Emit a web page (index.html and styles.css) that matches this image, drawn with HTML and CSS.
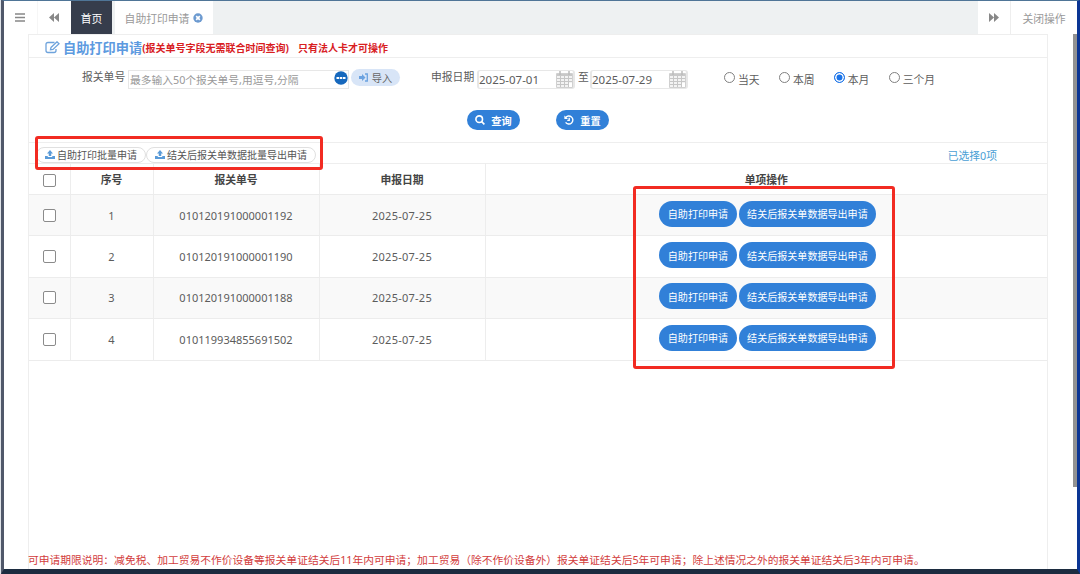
FILE: index.html
```html
<!DOCTYPE html>
<html lang="zh-CN">
<head>
  <meta charset="UTF-8">
  <meta name="viewport" content="width=device-width, initial-scale=1.0">
  <title>自助打印申请</title>
  <link rel="stylesheet" href="styles.css">
</head>
<body>
<svg width="0" height="0" class="defs">
  <symbol id="upload" viewBox="0 0 20 18">
    <path d="M10 0L16 7H12.500V12H7.500V7H4Z"/>
    <path d="M0 12H5.500V14H14.500V12H20V18H0Z"/>
  </symbol>
  <symbol id="calendar" viewBox="0 0 17 17">
    <path d="M.5 2.500H16.500V16.500H.5Z" fill="#f3f3f3" stroke="#d0d0d0"/>
    <path d="M1 4H16" stroke="#c8c8c8" stroke-width="2"/>
    <path d="M4 0V4M13 0V4" stroke="#bbb" stroke-width="1.500"/>
    <path d="M1 7.500H16M1 10.500H16M1 13.500H13M4.500 5V16M8.500 5V16M12.500 5V16" stroke="#c6c6c6"/>
    <path d="M13 12H16V16H13Z" fill="#fff"/>
  </symbol>
</svg>
<div class="window">
  <nav class="tabs">
    <a class="tab-btn menu"><svg width="10" height="9" viewBox="0 0 10 9"><path d="M0 1H10M0 4.500H10M0 8H10" stroke="#888" stroke-width="1.300"/></svg></a>
    <a class="tab-btn back"><svg width="10" height="9" viewBox="0 0 10 9"><path d="M5 0V9L0 4.500ZM10 0V9L5 4.500Z" fill="#888"/></svg></a>
    <a class="tab home">首页</a>
    <a class="tab current">自助打印申请
      <svg width="10" height="10" viewBox="0 0 10 10"><circle cx="5" cy="5" r="4.700" fill="#6c9ad0"/><path d="M3.200 3.200L6.800 6.800M6.800 3.200L3.200 6.800" stroke="#fff" stroke-width="1.700"/></svg>
    </a>
    <a class="tab-btn forward"><svg width="10" height="9" viewBox="0 0 10 9"><path d="M0 0V9L5 4.500ZM5 0V9L10 4.500Z" fill="#888"/></svg></a>
    <a class="tab close">关闭操作</a>
  </nav>

  <div class="content">
    <div class="panel">
      <div class="title">
        <svg width="15" height="13" viewBox="0 0 15 13" fill="none" stroke="#6ea3dc" stroke-width="1.300"><path d="M9.500 1.500H3Q1 1.500 1 3.500V9.500Q1 11.500 3 11.500H9Q11 11.500 11 9.500V8"/><path d="M5.500 8.700L6 6.400L12 .8L14 2.800L8 8.400Z"/></svg>
        <h1>自助打印申请</h1>
        <span class="hint">(报关单号字段无需联合时间查询)</span>
        <span class="hint second">只有法人卡才可操作</span>
      </div>

      <div class="search">
        <div class="fields">
          <label class="lbl">报关单号</label>
          <div class="input number">
            <span>最多输入50个报关单号,用逗号,分隔</span>
            <svg width="14" height="14" viewBox="0 0 14 14"><circle cx="7" cy="7" r="6.700" fill="#1668bd"/><path d="M2.500 7H5M5.700 7H8.300M9 7H11.500" stroke="#fff" stroke-width="2.200"/></svg>
          </div>
          <button class="import"><svg width="10" height="9" viewBox="0 0 10 9"><path d="M0 3H3V1L6.500 4.500L3 8V6H0Z" fill="#6ba2e0"/><path d="M6 1H8.300V8H6" fill="none" stroke="#6ba2e0" stroke-width="1.300"/></svg>导入</button>
          <label class="lbl date-lbl">申报日期</label>
          <div class="input date">2025-07-01<svg width="17" height="17"><use href="#calendar"/></svg></div>
          <label class="lbl to">至</label>
          <div class="input date">2025-07-29<svg width="17" height="17"><use href="#calendar"/></svg></div>
          <div class="radios">
            <label><i class="radio"></i>当天</label>
            <label><i class="radio"></i>本周</label>
            <label><i class="radio on"></i>本月</label>
            <label><i class="radio"></i>三个月</label>
          </div>
        </div>
        <div class="actions">
          <button class="btn"><svg width="10" height="10" viewBox="0 0 10 10" fill="none" stroke="#fff" stroke-width="1.600"><circle cx="4.200" cy="4.200" r="3.300"/><path d="M6.600 6.600L9.400 9.400"/></svg>查询</button>
          <button class="btn"><svg width="10" height="10" viewBox="0 0 10 10" fill="none" stroke="#fff" stroke-width="1.400"><path d="M1.500 2.800A4 4 0 1 1 1.600 7.300M5.200 2.800V5.400H3.300"/><path d="M.4 .5V4H4Z" fill="#fff" stroke="none"/></svg>重置</button>
        </div>
      </div>

      <div class="toolbar">
        <button class="batch"><svg width="10" height="9"><use href="#upload"/></svg>自助打印批量申请</button>
        <button class="batch"><svg width="10" height="9"><use href="#upload"/></svg>结关后报关单数据批量导出申请</button>
        <span class="selected">已选择0项</span>
        <div class="mark mark-batch"></div>
      </div>

      <div class="table-wrap">
        <table>
          <colgroup><col class="c1"><col class="c2"><col class="c3"><col class="c4"><col></colgroup>
          <thead>
            <tr><th><i class="check"></i></th><th>序号</th><th>报关单号</th><th>申报日期</th><th>单项操作</th></tr>
          </thead>
          <tbody>
            <tr><td><i class="check"></i></td><td>1</td><td>010120191000001192</td><td class="day">2025-07-25</td><td><div class="ops"><button class="op">自助打印申请</button><button class="op">结关后报关单数据导出申请</button></div></td></tr>
            <tr><td><i class="check"></i></td><td>2</td><td>010120191000001190</td><td class="day">2025-07-25</td><td><div class="ops"><button class="op">自助打印申请</button><button class="op">结关后报关单数据导出申请</button></div></td></tr>
            <tr><td><i class="check"></i></td><td>3</td><td>010120191000001188</td><td class="day">2025-07-25</td><td><div class="ops"><button class="op">自助打印申请</button><button class="op">结关后报关单数据导出申请</button></div></td></tr>
            <tr><td><i class="check"></i></td><td>4</td><td>010119934855691502</td><td class="day">2025-07-25</td><td><div class="ops"><button class="op">自助打印申请</button><button class="op">结关后报关单数据导出申请</button></div></td></tr>
          </tbody>
        </table>
        <div class="mark mark-ops"></div>
      </div>

      <p class="notice">可申请期限说明：减免税、加工贸易不作价设备等报关单证结关后11年内可申请；加工贸易（除不作价设备外）报关单证结关后5年可申请；除上述情况之外的报关单证结关后3年内可申请。</p>
    </div>
    <div class="scrollbar"></div>
  </div>
</div>
</body>
</html>
```

FILE: styles.css
```css
* {
  box-sizing: border-box;
}
body {
  margin: 0;
  font-family: "Noto Sans", "Noto Sans CJK SC", sans-serif;
  font-size: 10.8px;
  color: #5c5c5c;
  background: #dfe3e8;
}
button {
  font-family: inherit;
  padding: 0;
  border: none;
  white-space: nowrap;
}
.defs {
  position: absolute;
}
.window {
  display: flex;
  flex-direction: column;
  height: 574px;
  margin-left: 1px;
  background: #fff;
  border-style: solid;
  border-width: 1px 3px 5px 3px;
  border-color: #4f7597 #0b3594 #1c2c40 #50586a;
}

/* tabs */
.tabs {
  display: flex;
  height: 33px;
  background: #eef1f2;
  color: #999;
}
.tab-btn, .tab {
  display: flex;
  align-items: center;
  justify-content: center;
  background: #fff;
  flex: none;
}
.tab-btn {
  width: 33px;
}
.menu {
  width: 34px;
  padding-right: 2px;
  border-right: 1px solid #f6f6f6;
}
.back {
  padding-right: 1px;
}
.home {
  width: 41px;
  background: #363d4c;
  color: #fff;
}
.current {
  width: 98px;
  margin-left: 3px;
  gap: 4px;
}
.forward {
  margin-left: auto;
  border-right: 1px solid #eee;
}
.close {
  width: 66px;
}

.content {
  display: flex;
  flex: 1;
  padding-left: 24px;
}
.panel {
  display: flex;
  flex-direction: column;
  width: 1020px;
  border: 1px solid #eee;
  border-bottom: none;
}
.scrollbar {
  width: 4px;
  height: 453px;
  margin-left: auto;
  background: #929292;
}

.title {
  display: flex;
  align-items: center;
  height: 23px;
  padding: 3px 0 0 16px;
  border-bottom: 1px solid #eee;
}
.title h1 {
  margin: 0 0 0 3px;
  font-size: 13.2px;
  line-height: 18px;
  color: #5c9ae0;
}
.hint {
  font-size: 10px;
  font-weight: bold;
  color: #d8201f;
}
.second {
  margin-left: 9px;
}

/* search form */
.search {
  height: 85px;
  padding-top: 10px;
  border-bottom: 1px solid #eee;
}
.fields {
  display: flex;
  align-items: flex-start;
  height: 32px;
  padding-left: 53px;
}
.lbl {
  width: 46px;
  line-height: 17px;
}
.input {
  display: flex;
  align-items: center;
  justify-content: space-between;
  height: 19px;
  margin-top: 2px;
  border: 1px solid #e7e7e7;
  white-space: nowrap;
}
.number {
  width: 221px;
  padding-left: 1px;
  font-size: 10.75px;
  color: #999;
}
.number svg {
  margin-top: -4px;
}
.import {
  display: flex;
  align-items: center;
  justify-content: center;
  gap: 3px;
  width: 49px;
  height: 17px;
  margin: 1px 0 0 2px;
  border-radius: 9px;
  background: #d8e5f7;
  color: #666;
  font-size: 10.2px;
}
.date-lbl {
  margin-left: 31px;
}
.date {
  width: 98px;
  padding-left: 0;
  border-width: 1px 2px;
  border-radius: 3px;
  font-size: 11.5px;
}
.to {
  width: 12px;
  margin-left: 3px;
}
.radios {
  display: flex;
  margin-left: 36px;
  gap: 19.3px;
  padding-top: 2px;
}
.radios label {
  display: flex;
  line-height: 19px;
}
.radio {
  width: 11px;
  height: 11px;
  margin: 2px 3px 0 0;
  border: 1px solid #808080;
  border-radius: 50%;
}
.radio.on {
  border-color: #1a73e8;
  background: #1a73e8;
  box-shadow: inset 0 0 0 1.5px #fff;
}
.actions {
  display: flex;
  gap: 36px;
  padding: 10px 0 0 438px;
}
.btn {
  display: flex;
  align-items: center;
  justify-content: center;
  gap: 6px;
  width: 53px;
  height: 20px;
  border-radius: 10px;
  background: #3180d8;
  color: #fff;
  font-size: 10.2px;
  font-weight: bold;
}

.toolbar {
  position: relative;
  z-index: 1;
  display: flex;
  align-items: center;
  height: 20px;
  padding: 3px 50px 0 7px;
}
.batch {
  display: flex;
  align-items: center;
  gap: 2px;
  height: 16px;
  padding: 0 8px;
  border: 1px solid #e0e0e0;
  border-radius: 8px;
  background: #fff;
  color: #555;
  font-size: 10px;
}
.batch svg {
  fill: #5b9bd8;
}
.selected {
  margin-left: auto;
  color: #4aa0d5;
}
/* red frames round the two groups of buttons */
.mark {
  position: absolute;
  border: 3px solid #f22b22;
  border-radius: 3px;
}
.mark-batch {
  left: 6px;
  top: -7px;
  width: 288px;
  height: 34px;
}
.mark-ops {
  left: 604px;
  top: 23px;
  width: 262px;
  height: 183px;
}

.table-wrap {
  position: relative;
}
table {
  width: 100%;
  table-layout: fixed;
  border-collapse: collapse;
  border-top: 1px solid #eee;
  text-align: center;
}
.c1 { width: 41px; }
.c2 { width: 83px; }
.c3 { width: 166px; }
.c4 { width: 166px; }
th, td {
  padding: 0;
  border-right: 1px solid #ededed;
  border-bottom: 1px solid #ececec;
}
th:last-child, td:last-child {
  border-right: none;
}
th {
  height: 31px;
  color: #444;
}
td {
  height: 41.4px;
  font-size: 11px;
}
.day {
  letter-spacing: 0.25px;
}
tbody tr:nth-child(odd) {
  background: #f9f9f9;
}
.check {
  display: block;
  width: 13px;
  height: 13px;
  margin: 3px auto 0;
  border: 1px solid #8b8b8b;
  border-radius: 2px;
  background: #fff;
}
td .check {
  margin-top: 0;
}
.ops {
  display: flex;
  justify-content: center;
  gap: 2px;
  margin-top: -3px;
  padding-left: 3px;
}
.op {
  height: 26px;
  padding: 0 8.5px;
  border-radius: 13px;
  background: #3180d8;
  color: #fff;
  font-size: 10.05px;
}

.notice {
  margin: auto 0 -1px -1px;
  line-height: 20px;
  font-size: 10.77px;
  color: #d23c3c;
  white-space: nowrap;
}
```
